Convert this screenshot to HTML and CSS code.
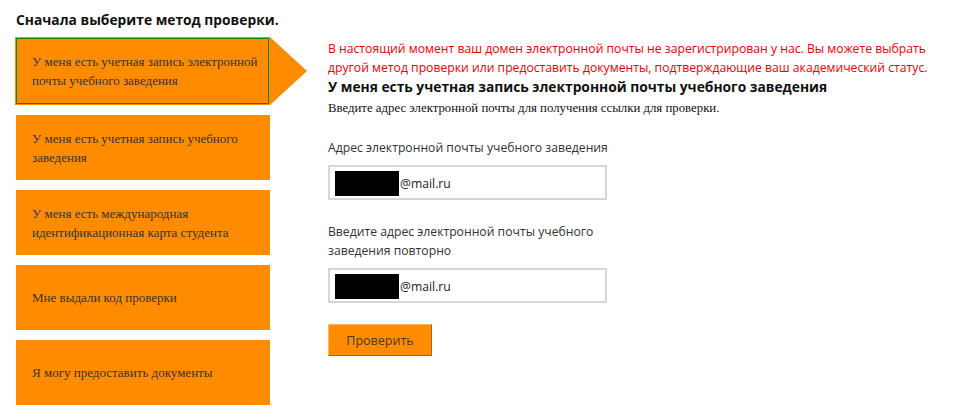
FILE: index.html
```html
<!DOCTYPE html>
<html lang="ru">
<head>
<meta charset="utf-8">
<title>Проверка</title>
<link rel="stylesheet" href="styles.css">
</head>
<body>
<div class="page">
  <h2 class="title">Сначала выберите метод проверки.</h2>
  <div class="columns">
    <div class="methods">
      <div class="method active">У меня есть учетная запись электронной почты учебного заведения<span class="arrow"></span></div>
      <div class="method">У меня есть учетная запись учебного заведения</div>
      <div class="method">У меня есть международная идентификационная карта студента</div>
      <div class="method">Мне выдали код проверки</div>
      <div class="method">Я могу предоставить документы</div>
    </div>
    <div class="form">
      <p class="error">В настоящий момент ваш домен электронной почты не зарегистрирован у нас. Вы можете выбрать другой метод проверки или предоставить документы, подтверждающие ваш академический статус.</p>
      <h3 class="form-title">У меня есть учетная запись электронной почты учебного заведения</h3>
      <p class="hint">Введите адрес электронной почты для получения ссылки для проверки.</p>
      <label class="label">Адрес электронной почты учебного заведения</label>
      <div class="input"><span class="redact"></span>@mail.ru</div>
      <label class="label">Введите адрес электронной почты учебного заведения повторно</label>
      <div class="input"><span class="redact"></span>@mail.ru</div>
      <button class="submit" type="button">Проверить</button>
    </div>
  </div>
</div>
</body>
</html>
```

FILE: styles.css
```css
html, body {
  margin: 0;
  padding: 0;
  background: #fff;
}

.page {
  padding: 10px 16px 0 16px;
  font-family: "Open Sans", "Noto Sans", sans-serif;
}

.title {
  margin: 0;
  font-size: 13.8px;
  line-height: 20px;
  font-weight: 700;
  color: #111;
}

.columns {
  display: flex;
  margin-top: 7px;
  gap: 58px;
}

.methods {
  width: 254px;
  flex: none;
  display: flex;
  flex-direction: column;
  gap: 10px;
}

.method {
  position: relative;
  box-sizing: border-box;
  height: 65px;
  padding: 0 6px 0 16px;
  display: flex;
  align-items: center;
  background: #ff8c00;
  color: #333;
  font-family: "Liberation Serif", "Times New Roman", serif;
  font-size: 13px;
  line-height: 19px;
}

.method.active {
  height: 68px;
  margin-left: -1px;
  padding-left: 17px;
  box-shadow: inset 0 0 0 1px #ff8c00, inset 0 0 0 2px #0a8a0a;
}

.arrow {
  position: absolute;
  top: 0;
  left: 100%;
  width: 0;
  height: 0;
  border-top: 34px solid transparent;
  border-bottom: 34px solid transparent;
  border-left: 37px solid #ff8c00;
}

.form {
  width: 615px;
  padding-top: 2px;
  display: flex;
  flex-direction: column;
  align-items: flex-start;
}

.error {
  margin: 0;
  color: #f00000;
  font-size: 12.2px;
  line-height: 19px;
}

.form-title {
  margin: 0;
  font-size: 13.8px;
  line-height: 20px;
  font-weight: 700;
  color: #111;
}

.hint {
  margin: 3px 0 0 0;
  font-family: "Liberation Serif", "Times New Roman", serif;
  font-size: 12.8px;
  line-height: 16px;
  color: #111;
}

.label {
  display: block;
  width: 290px;
  margin-top: 22px;
  font-size: 12.2px;
  line-height: 19px;
  color: #333;
}

.input {
  box-sizing: border-box;
  width: 279px;
  height: 35px;
  margin-top: 8px;
  padding: 4px 5px 2px 5px;
  border: 2px solid #d6d6d6;
  display: flex;
  align-items: center;
  font-size: 12.2px;
  color: #222;
}

.redact {
  display: inline-block;
  width: 64px;
  height: 25px;
  background: #000;
  margin-right: 1px;
}

.submit {
  margin-top: 21px;
  box-sizing: border-box;
  width: 104px;
  height: 32px;
  padding: 0;
  background: #ff8c00;
  border: 1px solid;
  border-color: #ffb866 #b86200 #b86200 #ffb866;
  font-family: "Open Sans", "Noto Sans", sans-serif;
  font-size: 12.5px;
  color: #4a3a2a;
  cursor: pointer;
}
```
